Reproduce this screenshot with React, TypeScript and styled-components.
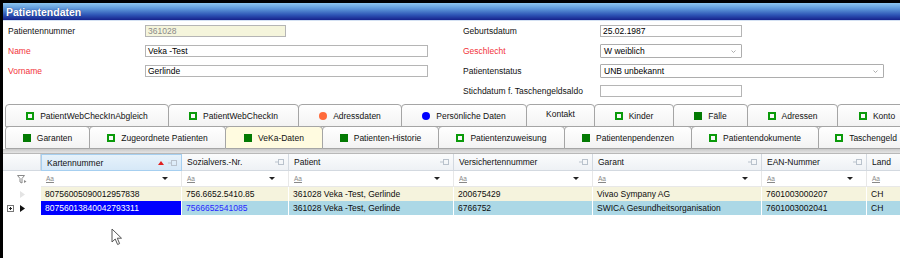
import React, { FC } from "react";
import styled, { createGlobalStyle, css } from "styled-components";

const GlobalStyle = createGlobalStyle`
  html, body {
    margin: 0;
    padding: 0;
    background: #fff;
  }
  body {
    font-family: "Liberation Sans", Arial, sans-serif;
    font-size: 8.5px;
    color: #0d0d0d;
    overflow: hidden;
  }
`;

const Frame = styled.div`
  position: relative;
  width: 900px;
  height: 258px;
  box-sizing: border-box;
  border-top: 3px solid #000;
  border-left: 3px solid #000;
  background: #fff;
  overflow: hidden;
`;

const TitleBar = styled.div`
  height: 17px;
  padding-left: 3px;
  display: flex;
  align-items: center;
  border-bottom: 1px solid #d4e1f3;
  background: linear-gradient(#8dc6f0 0%, #5b95d8 35%, #2e55b6 70%, #16228c 100%);
  color: #fff;
  font-weight: bold;
  font-size: 10.5px;
  text-shadow: 0 0 1px #1d2f7a;
`;

const Form = styled.div`
  display: flex;
  gap: 34px;
  padding-left: 5px;
`;

const FieldColumn = styled.div`
  display: flex;
  flex-direction: column;
  width: 421px;
`;

const Field = styled.div`
  display: grid;
  grid-template-columns: 137px 1fr;
  align-items: center;
  height: 20px;
`;

const Label = styled.span<{ $required?: boolean }>`
  color: ${({ $required }) => ($required ? "#f2333a" : "#111")};
  white-space: nowrap;
`;

const TextInput = styled.div<{ $width: number; $readOnly?: boolean }>`
  width: ${({ $width }) => $width}px;
  height: 12px;
  box-sizing: border-box;
  border: 1px solid #b5b5b5;
  padding: 0 2px;
  line-height: 10px;
  white-space: nowrap;
  ${({ $readOnly }) =>
    $readOnly
      ? css`
          background: #f5f5dc;
          color: #8a8a8a;
        `
      : css`
          background: #fff;
          color: #000;
        `}
`;

const SelectBox = styled.div<{ $width: number }>`
  width: ${({ $width }) => $width}px;
  height: 14px;
  box-sizing: border-box;
  border: 1px solid #adadad;
  border-radius: 1px;
  padding: 0 5px 0 3px;
  display: flex;
  align-items: center;
  justify-content: space-between;
  background: #fff;
  color: #000;
`;

const Chevron = () => (
  <svg width="5" height="3" viewBox="0 0 5 3">
    <path d="M0.5 0.5 L2.5 2.5 L4.5 0.5" fill="none" stroke="#999" strokeWidth="0.8" />
  </svg>
);

const TabArea = styled.div`
  margin-top: 3px;
  padding-left: 2px;
`;

const TabRow = styled.div`
  display: flex;
  & + & {
    margin-top: -1px;
  }
`;

const Tab = styled.div<{ $width: number; $active?: boolean; $raised?: boolean }>`
  flex: none;
  width: ${({ $width }) => $width}px;
  height: 23px;
  box-sizing: border-box;
  margin-right: -1px;
  padding-bottom: ${({ $raised }) => ($raised ? 3 : 0)}px;
  border: 1px solid #a5a5a5;
  border-radius: 4px 4px 0 0;
  display: flex;
  align-items: center;
  justify-content: center;
  gap: 6px;
  white-space: nowrap;
  color: #111;
  background: ${({ $active }) =>
    $active ? "#fffbe0" : "linear-gradient(#ffffff, #f3f3f3)"};
`;

type IconKind = "hollow" | "filled" | "orange" | "blue" | "none";

const TabIcon = styled.span<{ $kind: IconKind }>`
  flex: none;
  display: ${({ $kind }) => ($kind === "none" ? "none" : "inline-block")};
  box-sizing: border-box;
  width: 8px;
  height: 8px;
  ${({ $kind }) => {
    switch ($kind) {
      case "hollow":
        return css`
          border: 2px solid #0a9a0a;
        `;
      case "filled":
        return css`
          background: #037a03;
        `;
      case "orange":
        return css`
          border-radius: 50%;
          background: #ff6a3a;
        `;
      case "blue":
        return css`
          border-radius: 50%;
          background: #0000ff;
        `;
      default:
        return "";
    }
  }}
`;

const SeparatorBar = styled.div`
  height: 4px;
  background: linear-gradient(#c9c9c9, #e4e4e4);
  border-bottom: 1px solid #b8b8b8;
`;

const Grid = styled.div`
  display: grid;
  grid-template-columns: 38px 141px 107px 165px 139px 169px 105px 60px;
`;

const HeaderCell = styled.div<{ $sorted?: boolean }>`
  position: relative;
  height: 17px;
  box-sizing: border-box;
  padding-left: 5px;
  display: flex;
  align-items: center;
  white-space: nowrap;
  color: #111;
  ${({ $sorted }) =>
    $sorted
      ? css`
          background: linear-gradient(#e6f2fb, #d6e8f7);
          border: 1px solid #a6cff0;
        `
      : css`
          background: linear-gradient(#fbfcfd, #eef1f5);
          border-right: 1px solid #d3d9e0;
          border-bottom: 1px solid #d3d9e0;
        `}
`;

const HeaderIcons = styled.span`
  position: absolute;
  right: 4px;
  top: 50%;
  transform: translateY(-50%);
  display: flex;
  align-items: center;
  gap: 4px;
`;

const FilterCell = styled.div`
  height: 16px;
  box-sizing: border-box;
  padding: 0 13px 0 5px;
  display: flex;
  align-items: center;
  justify-content: space-between;
  background: #fff;
  border-right: 1px solid #e8e8e8;
  border-bottom: 1px solid #e8e8e8;
`;

const CaseGlyph = styled.span`
  font-size: 6.5px;
  color: #888;
  text-decoration: underline;
`;

const SelectorCell = styled.div<{ $height: number; $inset?: number }>`
  height: ${({ $height }) => $height}px;
  box-sizing: border-box;
  display: flex;
  align-items: center;
  gap: 6px;
  padding-left: ${({ $inset }) => $inset ?? 4}px;
  background: #fff;
`;

const DataCell = styled.div<{ $bg: string; $selected?: boolean; $link?: boolean }>`
  height: 14px;
  box-sizing: border-box;
  padding-left: 4px;
  display: flex;
  align-items: center;
  white-space: nowrap;
  overflow: hidden;
  border-right: 1px solid #fff;
  background: ${({ $bg, $selected }) => ($selected ? "#0000ff" : $bg)};
  color: ${({ $selected, $link }) => ($selected ? "#fff" : $link ? "#2626ff" : "#0d0d0d")};
`;

const Cursor = styled.svg`
  position: absolute;
  left: 108px;
  top: 225px;
`;

const PinIcon = () => (
  <svg width="9" height="6" viewBox="0 0 9 6">
    <path d="M0 3 H3" stroke="#b9c2cc" strokeWidth="1" />
    <rect x="3.5" y="0.5" width="5" height="5" fill="none" stroke="#b9c2cc" strokeWidth="1" />
  </svg>
);

const SortUp = () => (
  <svg width="6" height="4" viewBox="0 0 6 4">
    <path d="M0 4 L3 0 L6 4 Z" fill="#e02020" />
  </svg>
);

const DropArrow = () => (
  <svg width="6" height="3" viewBox="0 0 6 3">
    <path d="M0 0 H6 L3 3 Z" fill="#222" />
  </svg>
);

const FunnelIcon = () => (
  <svg width="10" height="9" viewBox="0 0 10 9">
    <path d="M0.5 0.5 H7.5 L5 3.5 V8 L3 7 V3.5 Z" fill="none" stroke="#8a8a8a" strokeWidth="1" />
    <path d="M7 5 L9.5 6.5 L7 8 Z" fill="#8a8a8a" />
  </svg>
);

const PlayIcon: FC<{ color: string }> = ({ color }) => (
  <svg width="5" height="7" viewBox="0 0 5 7">
    <path d="M0 0 L5 3.5 L0 7 Z" fill={color} />
  </svg>
);

const ExpandIcon = () => (
  <svg width="7" height="7" viewBox="0 0 7 7">
    <rect x="0.5" y="0.5" width="6" height="6" fill="#fff" stroke="#777" strokeWidth="1" />
    <path d="M2 3.5 H5 M3.5 2 V5" stroke="#222" strokeWidth="1" />
  </svg>
);

const tabRow1: { label: string; icon: IconKind; width: number; raised?: boolean }[] = [
  { label: "PatientWebCheckInAbgleich", icon: "hollow", width: 164 },
  { label: "PatientWebCheckIn", icon: "hollow", width: 131 },
  { label: "Adressdaten", icon: "orange", width: 104 },
  { label: "Persönliche Daten", icon: "blue", width: 126 },
  { label: "Kontakt", icon: "none", width: 69, raised: true },
  { label: "Kinder", icon: "hollow", width: 80 },
  { label: "Fälle", icon: "filled", width: 75 },
  { label: "Adressen", icon: "hollow", width: 91 },
  { label: "Konto", icon: "hollow", width: 80 },
];

const tabRow2: { label: string; icon: IconKind; width: number; active?: boolean }[] = [
  { label: "Garanten", icon: "filled", width: 85 },
  { label: "Zugeordnete Patienten", icon: "hollow", width: 137 },
  { label: "VeKa-Daten", icon: "filled", width: 98, active: true },
  { label: "Patienten-Historie", icon: "filled", width: 117 },
  { label: "Patientenzuweisung", icon: "hollow", width: 127 },
  { label: "Patientenpendenzen", icon: "filled", width: 128 },
  { label: "Patientendokumente", icon: "hollow", width: 128 },
  { label: "Taschengeld", icon: "hollow", width: 96 },
];

const columns = [
  "Kartennummer",
  "Sozialvers.-Nr.",
  "Patient",
  "Versichertennummer",
  "Garant",
  "EAN-Nummer",
  "Land",
];

const rows = [
  {
    bg: "#f5f3dd",
    current: false,
    cells: [
      "80756005090012957838",
      "756.6652.5410.85",
      "361028 Veka -Test, Gerlinde",
      "200675429",
      "Vivao Sympany AG",
      "7601003000207",
      "CH",
    ],
  },
  {
    bg: "#acd8e6",
    current: true,
    cells: [
      "80756013840042793311",
      "7566652541085",
      "361028 Veka -Test, Gerlinde",
      "6766752",
      "SWICA Gesundheitsorganisation",
      "7601003002041",
      "CH",
    ],
  },
];

export default function App() {
  return (
    <>
      <GlobalStyle />
      <Frame>
        <TitleBar>Patientendaten</TitleBar>
        <Form>
          <FieldColumn>
            <Field>
              <Label>Patientennummer</Label>
              <TextInput $width={141} $readOnly>
                361028
              </TextInput>
            </Field>
            <Field>
              <Label $required>Name</Label>
              <TextInput $width={283}>Veka -Test</TextInput>
            </Field>
            <Field>
              <Label $required>Vorname</Label>
              <TextInput $width={283}>Gerlinde</TextInput>
            </Field>
          </FieldColumn>
          <FieldColumn>
            <Field>
              <Label>Geburtsdatum</Label>
              <TextInput $width={142}>25.02.1987</TextInput>
            </Field>
            <Field>
              <Label $required>Geschlecht</Label>
              <SelectBox $width={142}>
                W weiblich
                <Chevron />
              </SelectBox>
            </Field>
            <Field>
              <Label>Patientenstatus</Label>
              <SelectBox $width={284}>
                UNB unbekannt
                <Chevron />
              </SelectBox>
            </Field>
            <Field>
              <Label>Stichdatum f. Taschengeldsaldo</Label>
              <TextInput $width={142} />
            </Field>
          </FieldColumn>
        </Form>

        <TabArea>
          <TabRow>
            {tabRow1.map((t) => (
              <Tab key={t.label} $width={t.width} $raised={t.raised}>
                <TabIcon $kind={t.icon} />
                {t.label}
              </Tab>
            ))}
          </TabRow>
          <TabRow>
            {tabRow2.map((t) => (
              <Tab key={t.label} $width={t.width} $active={t.active}>
                <TabIcon $kind={t.icon} />
                {t.label}
              </Tab>
            ))}
          </TabRow>
        </TabArea>
        <SeparatorBar />

        <Grid>
          <HeaderCell />
          {columns.map((c, i) => (
            <HeaderCell key={c} $sorted={i === 0}>
              {c}
              <HeaderIcons>
                {i === 0 && <SortUp />}
                <PinIcon />
              </HeaderIcons>
            </HeaderCell>
          ))}

          <SelectorCell $height={16} $inset={14}>
            <FunnelIcon />
          </SelectorCell>
          {columns.map((c) => (
            <FilterCell key={c}>
              <CaseGlyph>Aa</CaseGlyph>
              <DropArrow />
            </FilterCell>
          ))}

          {rows.map((r, ri) => (
            <React.Fragment key={ri}>
              <SelectorCell $height={14} $inset={r.current ? 4 : 17}>
                {r.current && <ExpandIcon />}
                <PlayIcon color={r.current ? "#111" : "#e4e4e4"} />
              </SelectorCell>
              {r.cells.map((v, ci) => (
                <DataCell
                  key={ci}
                  $bg={r.bg}
                  $selected={r.current && ci === 0}
                  $link={r.current && ci === 1}
                >
                  {v}
                </DataCell>
              ))}
            </React.Fragment>
          ))}
        </Grid>

        <Cursor width="12" height="18" viewBox="0 0 12 18">
          <path
            d="M1 1 L1 14 L4.2 11 L6.6 16.5 L8.6 15.6 L6.3 10.2 L10.5 10.2 Z"
            fill="#fff"
            stroke="#555"
            strokeWidth="1"
            strokeLinejoin="round"
          />
        </Cursor>
      </Frame>
    </>
  );
}
